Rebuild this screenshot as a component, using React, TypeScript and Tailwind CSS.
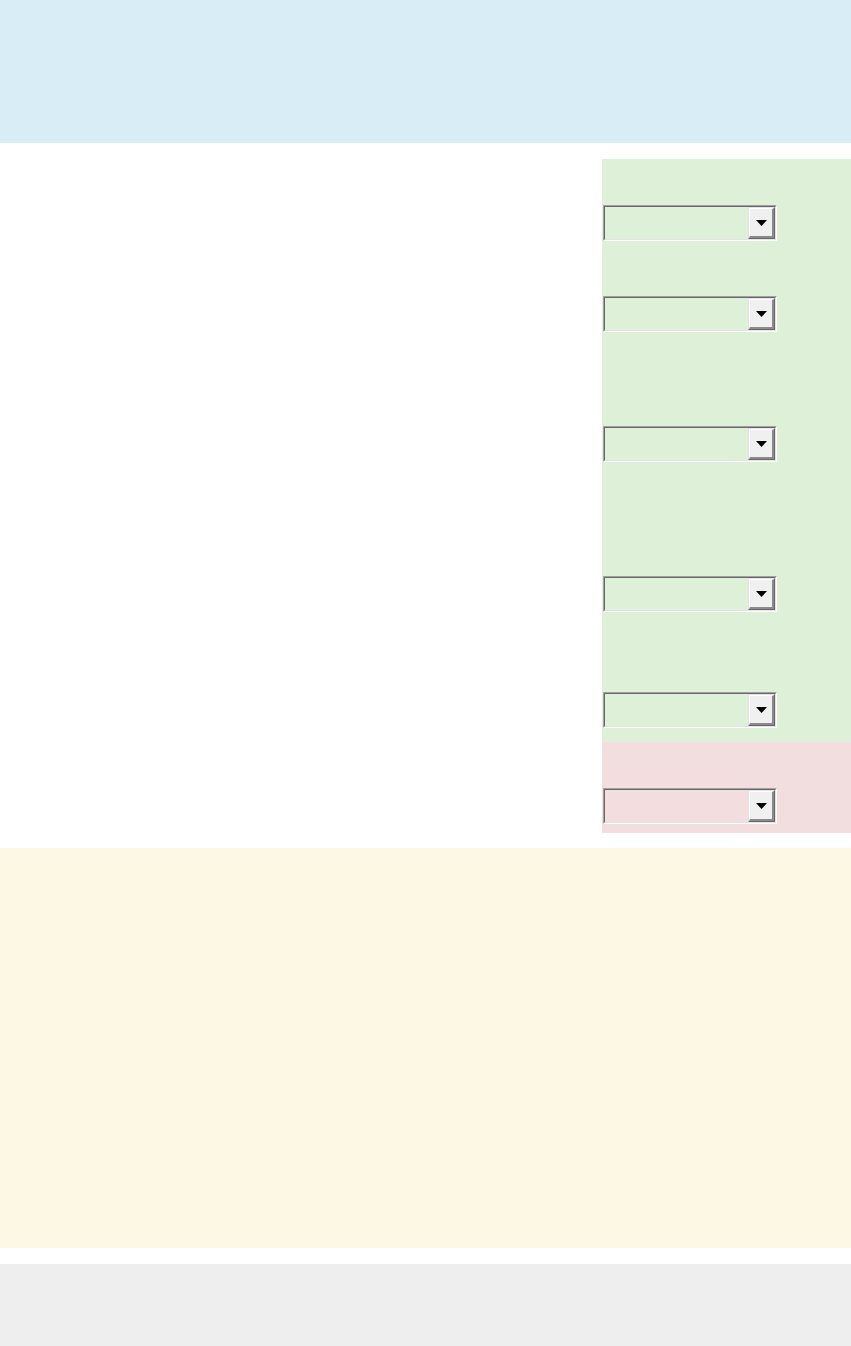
import React from "react";

function FakeSelect() {
  return (
    <div className="w-[174px] h-[36px] border-t border-l border-t-[#a0a0a0] border-l-[#a0a0a0] border-b border-r border-b-white border-r-white">
      <div className="h-full w-full flex justify-end border-t border-l border-t-[#696969] border-l-[#696969] border-b border-r border-b-[#e3e3e3] border-r-[#e3e3e3]">
        <div className="w-[27px] h-full border-t border-l border-t-[#e3e3e3] border-l-[#e3e3e3] border-b border-r border-b-[#696969] border-r-[#696969]">
          <div className="w-full h-full bg-[#f0f0f0] flex items-center justify-center border-t border-l border-t-white border-l-white border-b-2 border-r-2 border-b-[#8a8a8a] border-r-[#8a8a8a]">
            <svg width="11" height="6" viewBox="0 0 11 6">
              <polygon points="0,0 11,0 5.5,6" fill="#000" />
            </svg>
          </div>
        </div>
      </div>
    </div>
  );
}

export default function App() {
  return (
    <div className="w-[851px] bg-white" style={{ fontFamily: '"Liberation Sans", Arial, sans-serif' }}>
      <div className="h-[143px] bg-[#d9edf7]" />
      <div className="mt-[16px] flex h-[674px]">
        <div className="w-[602px]" />
        <div className="w-[249px] flex flex-col">
          <div className="h-[583px] bg-[#dff0d8] pl-px flex flex-col">
            <div className="mt-[46px]"><FakeSelect /></div>
            <div className="mt-[55px]"><FakeSelect /></div>
            <div className="mt-[94px]"><FakeSelect /></div>
            <div className="mt-[114px]"><FakeSelect /></div>
            <div className="mt-[80px]"><FakeSelect /></div>
          </div>
          <div className="h-[91px] bg-[#f2dede] pl-px flex flex-col">
            <div className="mt-[46px]"><FakeSelect /></div>
          </div>
        </div>
      </div>
      <div className="mt-[15px] h-[400px] bg-[#fcf8e3]" />
      <div className="mt-[16px] h-[82px] bg-[#eeeeee]" />
    </div>
  );
}
